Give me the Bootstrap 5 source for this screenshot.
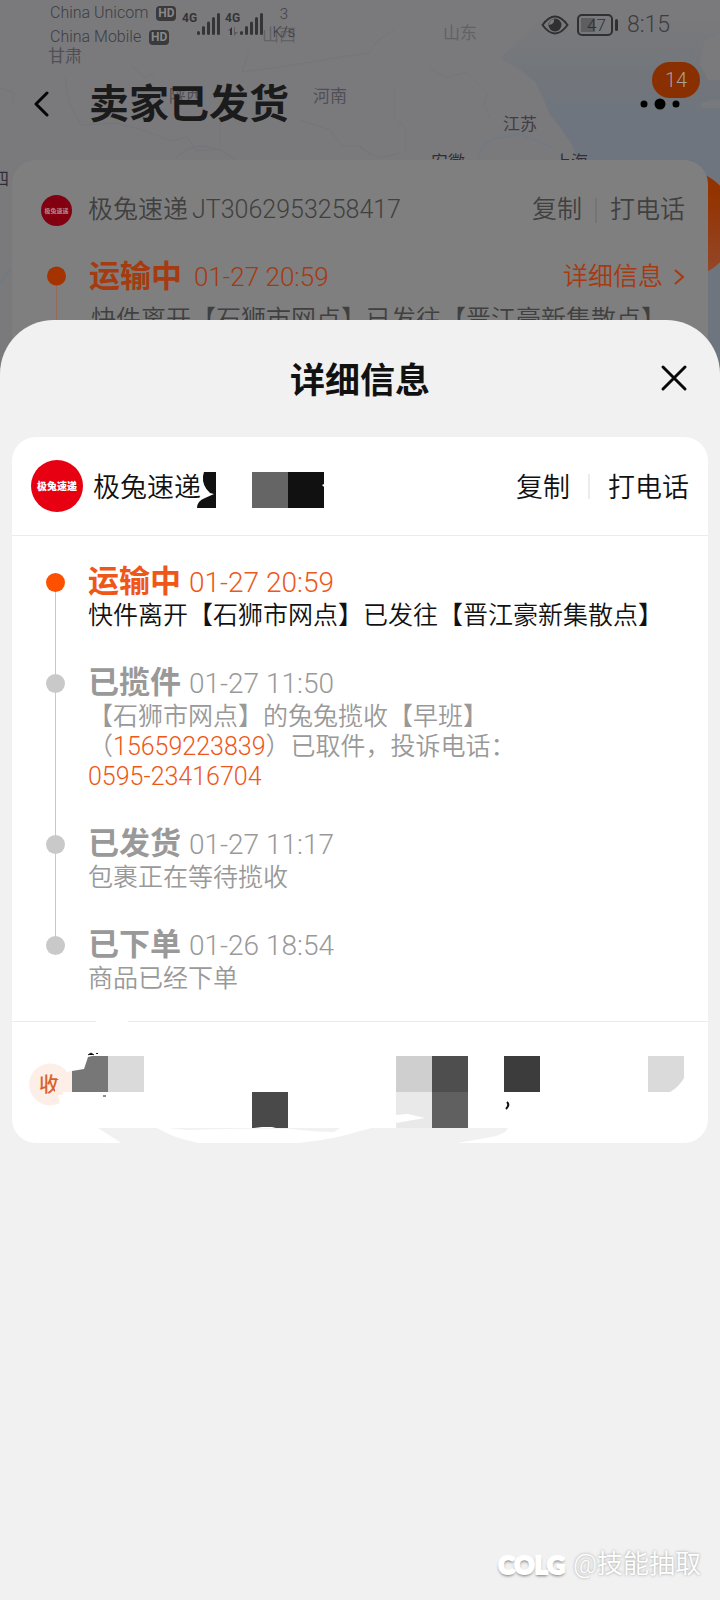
<!DOCTYPE html>
<html lang="zh-CN">
<head>
<meta charset="utf-8">
<meta name="viewport" content="width=device-width, initial-scale=1">
<title>详细信息</title>
<link rel="stylesheet" href="https://cdn.jsdelivr.net/npm/bootstrap@5.3.0/dist/css/bootstrap.min.css">
<style>
  body { background: #f1f1f1; color: #111; font-family: Roboto, "Noto Sans CJK SC", sans-serif; font-weight: 350; }
  button { font: inherit; color: inherit; background: none; border: 0; padding: 0; }
  a { text-decoration: none; }

  /* dimmed page behind the sheet */
  .behind { height: 374px; background: #7a7a7d; color: #404040; }
  .map-layer { position: absolute; inset: 0; width: 100%; height: 100%; }
  .status-bar { height: 54px; padding: 1px 50px; color: #3d3d3f; }
  .carrier { font-size: 16px; line-height: 24px; }
  .hd-tag { font-size: 12px; line-height: 15px; width: 20px; background: #3a3a3c; color: #88888a; border-radius: 4px; }
  .rate { font-size: 15px; line-height: 18px; }
  .clock { font-size: 23px; line-height: 32px; }
  .title-bar { height: 106px; padding: 0 40px 6px 34px; }
  .page-title { font-size: 40px; line-height: 48px; font-weight: 700; color: #1b1b1b; margin: 2px 0 0 39px; }
  .more-count { right: -20px; top: -36px; width: 48px; height: 36px; border-radius: 18px; background: #892f00; color: #a8a09c; font-size: 20px; line-height: 36px; }
  .dim-card { background: #7f7f7f; border-radius: 24px; margin: 0 12px; padding-top: 33px; height: 220px; font-size: 25px; line-height: 34px; }
  .dim-row { padding: 0 23px 0 29px; }
  .dim-logo { width: 31px; height: 31px; }
  .dim-orange { color: #a63a10; }
  .dim-state { font-size: 31px; font-weight: 700; margin-left: 17px; }
  .dim-text { margin-left: 50px; }
  .time-sm { font-size: 26px; margin-left: 12px; }
  .vline { width: 2px; height: 25px; background: #ececec; margin: 0 18px; }
  .dim-card .vline { background: #757575; margin: 0 13px; }

  /* sheet */
  .sheet { margin-top: -54px; min-height: calc(100vh - 320px); background: #f1f1f1; border-radius: 54px 54px 0 0; }
  .sheet-head { height: 117px; padding: 6px 32px 0; }
  .sheet-title { font-size: 35px; line-height: 44px; font-weight: 700; margin: 0; }
  .close-btn { right: 32px; top: 44px; }
  .info-card { background: #fff; border-radius: 24px; margin: 0 12px; }
  .card-head { height: 99px; padding: 0 19px; font-size: 27px; line-height: 36px; border-bottom: 1px solid #ececec; }
  .card-head button, .brand-name { padding-top: 4px; }
  .brand-name { margin-left: 10px; }
  .mosaic { margin-left: -4px; }
  .timeline { padding: 27px 20px 27px 34px; margin: 0; list-style: none; color: #999; }
  .step { padding: 0 0 33px 42px; position: relative; font-size: 25px; line-height: 30px; }
  .step:last-child { padding-bottom: 0; }
  .step::before { content: ""; position: absolute; left: 0; top: 10px; width: 19px; height: 19px; border-radius: 50%; background: #c9c9c9; z-index: 1; }
  .step:not(:last-child)::after { content: ""; position: absolute; left: 9px; top: 20px; width: 1px; height: 100%; background: #c9c9c9; }
  .step.now { color: #111; }
  .step.now::before { background: #ff5000; }
  .step h2 { font-size: 31px; line-height: 37px; height: 38px; font-weight: 700; margin: 0; }
  .step time { font-size: 28px; line-height: 30px; font-weight: 350; margin-left: 8px; }
  .step p { margin: 0; max-width: 600px; }
  .hot, .step.now h2 { color: #ee5718; }
  .step .msg-short { max-width: 430px; }

  .watermark { padding: 0 19px 17px; font-size: 26px; line-height: 38px; color: #fff; text-shadow: 0 0 3px #999; }
  .colg { font: 900 25px/38px Lato, sans-serif; -webkit-text-stroke: 2px #fff; text-shadow: 0 2px 3px #777; }
</style>
</head>
<body>

<div class="behind position-relative overflow-hidden">
  <svg class="map-layer" viewBox="0 0 720 374" preserveAspectRatio="xMinYMin slice" aria-hidden="true">
    <defs>
      <linearGradient id="sea" x1="0" y1="20" x2="0" y2="130" gradientUnits="userSpaceOnUse"><stop offset="0" stop-color="#79797b"/><stop offset=".5" stop-color="#72767b"/><stop offset="1" stop-color="#6e757f"/></linearGradient>
      <linearGradient id="orb" x1="0" y1="0" x2="0" y2="1"><stop offset=".2" stop-color="#933300"/><stop offset="1" stop-color="#94482b"/></linearGradient>
    </defs>
    <path fill="url(#sea)" d="M540 20 500 58 520 70 535 82 543 98 550 115 562 130 572 145 580 165 600 374 720 374 720 20Z"/>
    <path fill="#7a7a7c" d="M704 40l16-6v46h-12l-8-16z"/>
    <path fill="#77797d" d="M700 104q10-6 20-4v8h-18z"/>
    <g fill="none" stroke="#74767b">
      <path d="M0 88l14 5-2 12M65 78l4 25 12 22 35-2 30 8 25 10 16-4 10 14 20-2 18 10 15 8M130 65l14 12 10-4M176 158q18-20 50-6"/>
      <path d="M250 48l-8 24 30-4 40-6 35-6 22-3 8-12 18-12M220 115v32M300 120l30 10 12 16 18 0 12 10"/>
      <path d="M430 68l16 10 20-6 22 22-4 10 6 14M395 90v28l10 10v22M360 148l20 10 20-5"/>
      <path stroke="#717985" stroke-width="1.500" d="M478 160q4-22 22-22l20-4 20 8 14 6M0 285q10-20 12-12"/>
    </g>
    <g font-family="'Noto Sans CJK SC', sans-serif" font-size="17" font-weight="400" fill="#514e56">
      <text x="48" y="62">甘肃</text><text x="262" y="41" fill="#626165">山西</text><text x="443" y="39" fill="#626165">山东</text>
      <text x="169" y="102">陕西</text><text x="313" y="102">河南</text><text x="503" y="130" fill="#413d47">江苏</text>
      <text x="431" y="168" fill="#312d35">安徽</text><text x="554" y="168" fill="#312d35">上海</text><text x="-8" y="185" fill="#312d35">四</text>
    </g>
    <circle cx="682" cy="224" r="54" fill="url(#orb)"/>
  </svg>

  <div class="position-relative">
    <div class="status-bar d-flex">
      <div class="carrier">
        <div class="d-flex align-items-center gap-2">China Unicom <span class="hd-tag fw-bold text-center">HD</span></div>
        <div class="d-flex align-items-center gap-2">China Mobile <span class="hd-tag fw-bold text-center">HD</span></div>
      </div>
      <svg class="ms-1" width="84" height="40" viewBox="178 1 84 40" aria-label="4G">
        <g fill="#353537" font-size="12" font-weight="700"><text x="180" y="22">4G</text><text x="223" y="22">4G</text></g>
        <path stroke="#353537" stroke-width="3" stroke-linecap="round" d="M196.500 32.500v1M201.500 27.500v6M206.500 23v10.500M211.500 18.500v15M216.500 14.500v19M239.500 32.500v1M244.500 27.500v6M249.500 23v10.500M254.500 18.500v15M259.500 14.500v19"/>
        <path fill="#353537" d="M226 31l4-4v8h-2v-5z"/><path fill="#5c5c5f" d="M232 27h1v5h3l-4 4z"/>
      </svg>
      <div class="rate text-center ms-2 pt-1">3<br>K/s</div>
      <div class="d-flex align-items-center ms-auto mt-1 gap-2 h-75">
        <svg width="28" height="20" viewBox="0 0 28 20" aria-label="护眼"><path fill="none" stroke="#303032" stroke-width="2" d="M1.500 10Q14-7 26.500 10 14 27 1.500 10Z"/><circle cx="14" cy="10" r="6.500" fill="#303032"/><path fill="#7a7a7d" d="M13 4q1 5-5 6 0-5 5-6z"/></svg>
        <svg width="42" height="22" viewBox="0 0 42 22"><rect x="1" y="1" width="34" height="20" rx="4" fill="none" stroke="#303032" stroke-width="2"/><rect x="4" y="4" width="14" height="14" fill="#5e5e60"/><rect x="38" y="5" width="3" height="12" rx="1.500" fill="#303032"/><text x="10" y="17" font-size="17" fill="#303032">47</text></svg>
        <span class="clock">8:15</span>
      </div>
    </div>

    <div class="title-bar d-flex align-items-center">
      <button aria-label="返回"><svg class="d-block" width="16" height="26" viewBox="0 0 16 26"><path d="M13 2 2 13 13 24" fill="none" stroke="#060606" stroke-width="3" stroke-linecap="round" stroke-linejoin="round"/></svg></button>
      <h1 class="page-title">卖家已发货</h1>
      <button class="position-relative ms-auto" aria-label="更多">
        <svg class="d-block" width="40" height="12" viewBox="0 0 40 12"><circle cx="4" cy="6" r="3.500"/><circle cx="20" cy="6" r="5.500"/><circle cx="36" cy="6" r="3.500"/></svg>
        <span class="more-count position-absolute">14</span>
      </button>
    </div>

    <div class="dim-card">
      <div class="dim-row d-flex align-items-center">
        <svg class="dim-logo" viewBox="0 0 52 52"><circle cx="26" cy="26" r="26" fill="#830010"/><text x="26" y="30" text-anchor="middle" font-size="10" font-weight="700" fill="#b09090">极兔速递</text></svg>
        <span class="ms-3">极兔速递</span><span class="ms-1">JT3062953258417</span>
        <button class="ms-auto">复制</button><span class="vline"></span><button>打电话</button>
      </div>
      <div class="dim-row d-flex align-items-center dim-orange mt-4 pt-2">
        <svg width="31" height="36" viewBox="0 0 31 36" overflow="visible"><path d="M15.500 15v70" stroke="#956a58"/><circle cx="15.500" cy="17" r="9.500" fill="#a43300"/></svg>
        <strong class="dim-state">运输中</strong><span class="time-sm">01-27 20:59</span>
        <a href="#detail" class="dim-orange ms-auto">详细信息</a>
        <svg class="ms-2" width="14" height="18" viewBox="0 0 14 18"><path d="M4 2l8 7-8 7" fill="none" stroke="#a63a10" stroke-width="2"/></svg>
      </div>
      <div class="dim-row mt-2"><div class="dim-text">快件离开【石狮市网点】已发往【晋江豪新集散点】</div></div>
    </div>
  </div>
</div>

<main class="sheet position-relative d-flex flex-column" id="detail">
  <header class="sheet-head d-flex align-items-center justify-content-center">
    <h1 class="sheet-title">详细信息</h1>
    <button class="close-btn position-absolute" aria-label="关闭"><svg class="d-block" width="28" height="28" viewBox="0 0 28 28"><path d="M3 3l22 22M25 3 3 25" stroke="#090909" stroke-width="3" stroke-linecap="round"/></svg></button>
  </header>

  <section class="info-card overflow-hidden">
    <div class="card-head d-flex align-items-center">
      <svg width="52" height="52" viewBox="0 0 52 52" aria-hidden="true"><circle cx="26" cy="26" r="26" fill="#e60012"/><text x="26" y="30" text-anchor="middle" font-size="10" font-weight="900" fill="#fff">极兔速递</text></svg>
      <span class="brand-name">极兔速递</span>
      <svg class="mosaic mt-2" width="127" height="36" viewBox="197 0 127 36" aria-hidden="true">
        <path fill="#111" d="M204 0h12v36h-19q0-7 8-10l9-4-4-1q-8-7-7-17z"/><path fill="#656565" d="M252 0h36v36h-36z"/><path fill="#111" d="M288 0h36v12l-2 1 2 2v21h-36z"/>
      </svg>
      <button class="ms-auto">复制</button><span class="vline"></span><button>打电话</button>
    </div>

    <ol class="timeline">
      <li class="step now"><h2>运输中<time>01-27 20:59</time></h2><p>快件离开【石狮市网点】已发往【晋江豪新集散点】</p></li>
      <li class="step"><h2>已揽件<time>01-27 11:50</time></h2><p class="msg-short">【石狮市网点】的兔兔揽收【早班】（<a class="hot" href="tel:15659223839">15659223839</a>）已取件，投诉电话：<a class="hot" href="tel:0595-23416704">0595-23416704</a></p></li>
      <li class="step"><h2>已发货<time>01-27 11:17</time></h2><p>包裹正在等待揽收</p></li>
      <li class="step"><h2>已下单<time>01-26 18:54</time></h2><p>商品已经下单</p></li>
    </ol>

    <svg class="d-block w-100" viewBox="12 1020 696 122">
      <path d="M12 1020.500h84M128 1020.500h580" stroke="#ececec"/>
      <path fill="#fdeee8" d="M72 1070v21H57l3 11a21 21 0 1 1 7-31z"/>
      <text x="39" y="1091" font-size="20" font-weight="500" fill="#d9622b">收</text>
      <path fill="#fdeee8" d="M57 1070h5v8h-5zM55 1086h8v8h-8z"/>
      <path fill="#777" d="M72 1070l12-2 4-12 4-1h16v36H72z"/>
      <path fill="#dadada" d="M108 1055h36v36h-36z"/>
      <path stroke="#222" d="M88 1054l3-2 3 2M96 1052.500h2M103 1095h3"/>
      <path fill="#494949" d="M252 1091h36v36h-12l-4-1h-10l-8 1h-2z"/>
      <path fill="#cfcfcf" d="M396 1055h36v36h-36z"/><path fill="#4e4e4e" d="M432 1055h36v36h-36z"/>
      <path fill="#e9e9e9" d="M396 1091h36v36h-36z"/><path fill="#606060" d="M432 1091h36v36h-36z"/>
      <path fill="#fff" d="M396 1114l12-1 17 4-29 5z"/>
      <path fill="#3c3c3c" d="M504 1055h36v36h-36z"/>
      <path d="M507 1101q3 3-1 7" fill="none" stroke="#111" stroke-width="2"/>
      <path fill="#dadada" d="M648 1055h36v22q-5 9-14 14h-22z"/>
      <path fill="#f1f1f1" d="M98 1127h59q20 12 48 16h-82zM285 1143q45-3 75-13l12-3h136q-2 6-16 9l-40 7zM168 1127h172l-6 4q-20 0-42-3-50-1-104 1z"/>
    </svg>
  </section>

  <footer class="watermark mt-auto d-flex justify-content-end align-items-center">
    <span class="colg me-2">COLG</span><span>@技能抽取</span>
  </footer>
</main>

<script src="https://cdn.jsdelivr.net/npm/bootstrap@5.3.0/dist/js/bootstrap.bundle.min.js"></script>
</body>
</html>
